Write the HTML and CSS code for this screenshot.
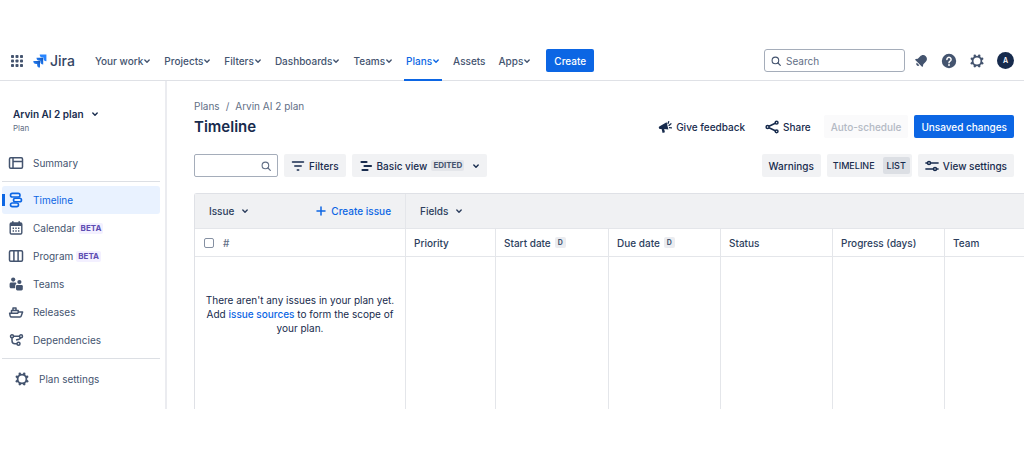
FILE: index.html
```html
<!DOCTYPE html>
<html lang="en">
<head>
<meta charset="utf-8">
<meta name="viewport" content="width=device-width, initial-scale=1">
<title>Timeline - Arvin AI 2 plan - Jira</title>
<link rel="stylesheet" href="styles.css">
</head>
<body>
<svg class="sprite" aria-hidden="true">
  <symbol id="chevron" viewBox="0 0 8 8"><path d="M1.8 3 4 5.2 6.2 3" fill="none" stroke="currentColor" stroke-width="1.4" stroke-linecap="round" stroke-linejoin="round"/></symbol>
  <symbol id="search" viewBox="0 0 12 12"><circle cx="5.4" cy="5.4" r="3.3" fill="none" stroke="currentColor" stroke-width="1.1"/><path d="m8 8 2.3 2.3" stroke="currentColor" stroke-width="1.2" stroke-linecap="round"/></symbol>
  <symbol id="gear" viewBox="0 0 16 16"><circle cx="8" cy="8" r="4.4" fill="none" stroke="currentColor" stroke-width="1.8"/><g fill="currentColor"><circle cx="5.8" cy="2.9" r="1.3"/><circle cx="10.2" cy="2.9" r="1.3"/><circle cx="13.1" cy="5.8" r="1.3"/><circle cx="13.1" cy="10.2" r="1.3"/><circle cx="10.2" cy="13.1" r="1.3"/><circle cx="5.8" cy="13.1" r="1.3"/><circle cx="2.9" cy="10.2" r="1.3"/><circle cx="2.9" cy="5.8" r="1.3"/></g></symbol>
</svg>

<header class="topbar">
  <button class="icon-button" aria-label="Switch apps">
    <svg class="icon-14" viewBox="0 0 14 14" fill="currentColor"><rect x="1" y="1" width="3" height="3" rx=".8"/><rect x="5.5" y="1" width="3" height="3" rx=".8"/><rect x="10" y="1" width="3" height="3" rx=".8"/><rect x="1" y="5.5" width="3" height="3" rx=".8"/><rect x="5.5" y="5.5" width="3" height="3" rx=".8"/><rect x="10" y="5.5" width="3" height="3" rx=".8"/><rect x="1" y="10" width="3" height="3" rx=".8"/><rect x="5.5" y="10" width="3" height="3" rx=".8"/><rect x="10" y="10" width="3" height="3" rx=".8"/></svg>
  </button>
  <a class="brand" href="#">
    <svg class="brand-mark" viewBox="0 0 14 14">
      <defs><linearGradient id="fold" x1="1" y1="0" x2="0" y2="1"><stop offset=".1" stop-color="#1558bc"/><stop offset=".7" stop-color="#2684ff"/></linearGradient></defs>
      <path fill="#2684ff" d="M6.7.6h6.700v6.600a2.900 2.900 0 0 1-2.900-2.900V3.500H9.600A2.900 2.900 0 0 1 6.700.6z"/>
      <path fill="url(#fold)" d="M3.500 3.800h6.700v6.600a2.900 2.900 0 0 1-2.900-2.900v-.8h-.9a2.900 2.900 0 0 1-2.900-2.900z"/>
      <path fill="url(#fold)" d="M.3 7H7v6.600a2.900 2.900 0 0 1-2.900-2.900v-.8h-.9A2.900 2.900 0 0 1 .3 7z"/>
    </svg>
    <span>Jira</span>
  </a>
  <nav class="mainnav" aria-label="Main">
    <button class="navitem">Your work <svg class="chev"><use href="#chevron"/></svg></button>
    <button class="navitem">Projects <svg class="chev"><use href="#chevron"/></svg></button>
    <button class="navitem">Filters <svg class="chev"><use href="#chevron"/></svg></button>
    <button class="navitem">Dashboards <svg class="chev"><use href="#chevron"/></svg></button>
    <button class="navitem">Teams <svg class="chev"><use href="#chevron"/></svg></button>
    <button class="navitem navitem-active">Plans <svg class="chev"><use href="#chevron"/></svg></button>
    <a class="navitem" href="#">Assets</a>
    <button class="navitem">Apps <svg class="chev"><use href="#chevron"/></svg></button>
  </nav>
  <button class="button button-primary create">Create</button>
  <label class="searchbox">
    <svg class="icon-12"><use href="#search"/></svg>
    <input type="search" placeholder="Search" aria-label="Search">
  </label>
  <div class="tools">
    <button class="icon-button" aria-label="Notifications">
      <svg class="icon-16" viewBox="0 0 16 16" fill="currentColor"><g transform="rotate(45 8 8)"><path d="M8 1.200c2.600 0 3.900 2 3.900 4.300v3.100l1.200 1.800v.9H2.900v-.9l1.200-1.800V5.500C4.100 3.200 5.400 1.200 8 1.200z"/><path d="M6.200 12.200h3.600a1.800 1.800 0 0 1-3.600 0z"/></g></svg>
    </button>
    <button class="icon-button" aria-label="Help">
      <svg class="icon-16" viewBox="0 0 16 16"><circle cx="8" cy="8" r="7.200" fill="currentColor"/><path d="M5.900 6.400a2.100 2.100 0 1 1 3.200 1.800c-.8.500-1.100.8-1.100 1.600" fill="none" stroke="#fff" stroke-width="1.500" stroke-linecap="round"/><circle cx="8" cy="12" r=".95" fill="#fff"/></svg>
    </button>
    <button class="icon-button" aria-label="Settings"><svg class="icon-16"><use href="#gear"/></svg></button>
    <button class="avatar" aria-label="Account">A</button>
  </div>
</header>

<div class="shell">
  <aside class="sidebar">
    <button class="plan-switch">Arvin AI 2 plan <svg class="chev"><use href="#chevron"/></svg></button>
    <div class="plan-kind">Plan</div>
    <nav class="sidenav" aria-label="Plan">
      <a class="sideitem" href="#">
        <svg class="icon-16" viewBox="0 0 16 16" fill="none" stroke="currentColor" stroke-width="1.500"><rect x="1.500" y="2.800" width="13" height="10.400" rx="1.200"/><path d="M5 3v10M5 6.400h9.500"/></svg>
        Summary</a>
      <hr class="rule">
      <a class="sideitem sideitem-active" href="#" aria-current="page">
        <svg class="icon-16" viewBox="0 0 16 16" fill="none" stroke="currentColor" stroke-width="1.600"><rect x="2.500" y="1.400" width="9.500" height="3.600" rx="1.800"/><rect x="5.500" y="6.200" width="8" height="3.600" rx="1.800"/><rect x="2.500" y="11" width="8" height="3.600" rx="1.800"/></svg>
        Timeline</a>
      <a class="sideitem" href="#">
        <svg class="icon-16" viewBox="0 0 16 16"><rect x="2.200" y="3" width="11.600" height="11" rx="1.200" fill="none" stroke="currentColor" stroke-width="1.400"/><path d="M2.200 3h11.600v3H2.200zM4 1.200h1.600V4H4zM10.400 1.200H12V4h-1.600z" fill="currentColor"/><path d="M4.600 8.300h7M4.600 11h7" stroke="currentColor" stroke-width="1.400" stroke-dasharray="1.400 1.300"/></svg>
        Calendar <span class="beta">BETA</span></a>
      <a class="sideitem" href="#">
        <svg class="icon-16" viewBox="0 0 16 16" fill="none" stroke="currentColor" stroke-width="1.500"><rect x="1.500" y="2.800" width="13" height="10.400" rx="1.200"/><path d="M5.900 3v10M10.100 3v10"/></svg>
        Program <span class="beta">BETA</span></a>
      <a class="sideitem" href="#">
        <svg class="icon-16" viewBox="0 0 16 16" fill="currentColor"><circle cx="5.200" cy="3.600" r="2.100"/><path d="M1.600 8c0-.9.700-1.500 1.500-1.500h4c.8 0 1.300.5 1.300 1.200-.9.600-1.200 1.200-1.200 2.300v2.200H3.100c-.8 0-1.500-.7-1.500-1.500z"/><circle cx="11.400" cy="6" r="2.100"/><path d="M8 10.300C8 9.500 8.600 9 9.400 9h4c.8 0 1.400.5 1.400 1.300V13c0 .8-.6 1.400-1.400 1.400h-4C8.600 14.400 8 13.800 8 13z"/></svg>
        Teams</a>
      <a class="sideitem" href="#">
        <svg class="icon-16" viewBox="0 0 16 16" fill="none" stroke="currentColor" stroke-width="1.500" stroke-linejoin="round"><path d="M1.600 9.200h8l1.300-1.200h3.700l-1.500 4.200c-.1.500-.6.800-1.100.8H3.500c-.7 0-1.100-.4-1.300-1z"/><path d="M3.500 9V6.400h6.700V8.800M5 6.200V3.900h3v2.300"/></svg>
        Releases</a>
      <a class="sideitem" href="#">
        <svg class="icon-16" viewBox="0 0 16 16" fill="none" stroke="currentColor" stroke-width="1.500"><circle cx="4" cy="4.300" r="1.500"/><circle cx="13" cy="4.300" r="1.500"/><circle cx="10.500" cy="11.800" r="1.500"/><path d="M5.500 4.300h6M4 5.800v2.900a3 3 0 0 0 3 3h2M12.600 5.800c-.5 1.700-2.500 1.800-4.600 2.200"/></svg>
        Dependencies</a>
      <hr class="rule">
      <a class="sideitem sideitem-inset" href="#"><svg class="icon-16"><use href="#gear"/></svg> Plan settings</a>
    </nav>
  </aside>

  <main class="content">
    <nav class="crumbs" aria-label="Breadcrumb"><a href="#">Plans</a><span>/</span><a href="#">Arvin AI 2 plan</a></nav>
    <div class="titlebar">
      <h1>Timeline</h1>
      <div class="actions">
        <button class="button button-plain">
          <svg class="icon-14" viewBox="0 0 14 14"><path fill="currentColor" d="M.8 7.600c-.2-.5 0-1 .5-1.200L8.600 2.300l1.800 7.200-4.200-.4.700 3.200-2.300.6-1-3.900-1.800-.1c-.4 0-.7-.3-.8-.7z"/><path d="M10 3.600l.7-2M11 5.400l2-1.600M11.500 7.700l2 .2" stroke="currentColor" stroke-width="1.300" stroke-linecap="round"/></svg>
          Give feedback</button>
        <button class="button button-plain">
          <svg class="icon-14" viewBox="0 0 14 14" fill="none" stroke="currentColor" stroke-width="1.500"><circle cx="2.600" cy="7" r="1.500"/><circle cx="11.600" cy="2.700" r="1.400"/><circle cx="11.600" cy="11.300" r="1.400"/><path d="m4 6.300 6.300-3M4 7.700l6.300 3"/></svg>
          Share</button>
        <button class="button button-disabled" disabled>Auto-schedule</button>
        <button class="button button-primary">Unsaved changes</button>
      </div>
    </div>
    <div class="toolbar">
      <label class="filterbox"><input type="search" aria-label="Search issues"><svg class="icon-12"><use href="#search"/></svg></label>
      <button class="button">
        <svg class="icon-14" viewBox="0 0 14 14" stroke="currentColor" stroke-width="1.500" stroke-linecap="round"><path d="M1.500 3h11M3.800 7h6.400M6.300 11h1.400"/></svg>
        Filters</button>
      <button class="button">
        <svg class="icon-14" viewBox="0 0 14 14" stroke="currentColor" stroke-width="2.200" stroke-linecap="round"><path d="M2.500 3h5M5.500 7H12M3.500 11h5"/></svg>
        Basic view <span class="edited">EDITED</span> <svg class="chev chev-end"><use href="#chevron"/></svg></button>
      <div class="toolbar-end">
        <button class="button">Warnings</button>
        <div class="switch" role="group" aria-label="View mode">
          <button class="mode">TIMELINE</button><button class="mode mode-on" aria-pressed="true">LIST</button>
        </div>
        <button class="button">
          <svg class="icon-14" viewBox="0 0 14 14" fill="none" stroke="currentColor" stroke-width="1.500" stroke-linecap="round"><circle cx="4" cy="4" r="1.500"/><circle cx="10" cy="10" r="1.500"/><path d="M.9 4h1.500M5.700 4h7.400M.9 10h7.400M11.600 10h1.500"/></svg>
          View settings</button>
      </div>
    </div>

    <table class="grid">
      <colgroup><col class="col-issue"><col class="col-priority"><col class="col-start"><col class="col-field"><col class="col-field"><col class="col-field"><col></colgroup>
      <thead>
        <tr class="groups">
          <th><div class="group"><button class="grouplabel">Issue <svg class="chev"><use href="#chevron"/></svg></button>
            <button class="create-issue"><svg class="icon-12" viewBox="0 0 12 12" stroke="currentColor" stroke-width="1.500" stroke-linecap="round"><path d="M6 2v8M2 6h8"/></svg>Create issue</button></div></th>
          <th colspan="6"><div class="group"><button class="grouplabel">Fields <svg class="chev"><use href="#chevron"/></svg></button></div></th>
        </tr>
        <tr class="fields">
          <th><div class="pick"><input type="checkbox" aria-label="Select all issues"><span>#</span></div></th>
          <th>Priority</th>
          <th><div class="field">Start date <span class="tag">D</span></div></th>
          <th><div class="field">Due date <span class="tag">D</span></div></th>
          <th>Status</th>
          <th>Progress (days)</th>
          <th>Team</th>
        </tr>
      </thead>
      <tbody>
        <tr>
          <td class="empty">There aren't any issues in your plan yet. Add <a href="#">issue sources</a> to form the scope of your plan.</td>
          <td></td><td></td><td></td><td></td><td></td><td></td>
        </tr>
      </tbody>
    </table>
  </main>
</div>
</body>
</html>
```
FILE: styles.css
```css
* { box-sizing: border-box; }

body {
  margin: 0;
  padding: 41px 0 42px;
  background: #fff;
  color: #172b4d;
  font: 10px/14px Inter, "Liberation Sans", sans-serif;
  overflow-x: hidden;
}

button, input { font: inherit; color: inherit; }
button { margin: 0; padding: 0; border: 0; background: none; cursor: pointer; }
a { color: inherit; text-decoration: none; }
svg { flex: none; }

.sprite { position: absolute; width: 0; height: 0; }
.chev { width: 8px; height: 8px; }
.chev-end { margin-left: 4px; }
.icon-12 { width: 12px; height: 12px; }
.icon-14 { width: 14px; height: 14px; }
.icon-16 { width: 16px; height: 16px; }

/* Top bar */
.topbar {
  display: flex;
  align-items: center;
  height: 40px;
  padding: 0 10px;
  border-bottom: 1px solid #dfe1e6;
  color: #44546f;
}
.icon-button { display: flex; }
.brand {
  display: flex;
  align-items: center;
  gap: 3px;
  margin: 0 18px 0 9px;
  color: #344563;
  font-size: 14px;
  font-weight: 500;
}
.brand-mark { width: 14px; height: 14px; }
.mainnav { display: flex; align-self: stretch; gap: 9px; }
.navitem {
  display: flex;
  align-items: center;
  height: 40px;
  padding: 0 2px;
  border-bottom: 2px solid transparent;
  border-top: 2px solid transparent;
  font-weight: 500;
  white-space: nowrap;
}
.navitem-active { color: #0c66e4; border-bottom-color: #0c66e4; }
.searchbox {
  display: flex;
  align-items: center;
  gap: 4px;
  width: 141px;
  height: 23px;
  margin-left: auto;
  padding: 0 5px;
  border: 1px solid #a5adba;
  border-radius: 3px;
}
.searchbox input, .filterbox input {
  flex: 1;
  min-width: 0;
  padding: 0;
  border: 0;
  outline: 0;
  background: none;
}
.searchbox input::placeholder { color: #626f86; opacity: 1; }
.tools { display: flex; align-items: center; gap: 12px; margin-left: 8px; }
.avatar {
  width: 17px;
  height: 17px;
  border-radius: 50%;
  background: #172b4d;
  color: #fff;
  font-size: 7px;
  font-weight: 600;
  line-height: 17px;
}

/* Buttons */
.button {
  display: flex;
  align-items: center;
  gap: 4px;
  height: 23px;
  padding: 0 7px;
  border-radius: 2px;
  background: #f1f2f4;
  font-weight: 500;
  white-space: nowrap;
}
.button-primary { background: #0c66e4; color: #fff; }
.button-plain { background: none; }
.button-disabled { background: #fafafb; color: #b3b9c4; cursor: default; }
.create { margin-left: 13px; padding: 0 8px; }

/* Sidebar */
.shell { display: flex; min-height: 328px; }
.sidebar {
  flex: none;
  width: 167px;
  padding: 26px 5px 0 2px;
  border-right: 2px solid #ebecf0;
  color: #44546f;
}
.plan-switch {
  display: flex;
  align-items: center;
  gap: 7px;
  padding-left: 11px;
  color: #172b4d;
  font-weight: 600;
}
.plan-kind { padding-left: 11px; color: #626f86; font-size: 8px; }
.sidenav { padding-top: 14px; }
.sideitem {
  display: flex;
  align-items: center;
  gap: 9px;
  height: 28px;
  padding-left: 6px;
  border-radius: 3px;
}
.sideitem-active {
  background: linear-gradient(#0c66e4, #0c66e4) left center / 3px 12px no-repeat #e9f2ff;
  color: #0c66e4;
}
.sideitem-inset { padding-left: 12px; }
.rule { height: 1px; margin: 4px 0; border: 0; background: #dcdfe4; }
.rule:last-of-type { margin-bottom: 6px; }
.beta {
  margin-left: -6px;
  padding: 0 2px;
  border-radius: 2px;
  background: #f3f0ff;
  color: #5e4db2;
  font-size: 8px;
  font-weight: 700;
  line-height: 11px;
}

/* Page heading */
.content { flex: 1; display: flex; flex-direction: column; min-width: 0; padding: 18px 0 0 27px; }
.crumbs { display: flex; gap: 6px; color: #626f86; }
.titlebar { display: flex; align-items: flex-start; padding: 2px 10px 0 0; }
h1 { margin: 0; font-size: 15px; font-weight: 600; line-height: 24px; }
.actions { display: flex; gap: 6px; margin-left: auto; }
.toolbar { display: flex; gap: 6px; padding: 15px 10px 16px 0; }
.toolbar-end { display: flex; gap: 6px; margin-left: auto; }
.filterbox {
  display: flex;
  align-items: center;
  width: 84px;
  height: 23px;
  padding: 0 5px;
  border: 1px solid #a5adba;
  border-radius: 2px;
  color: #626f86;
}
.edited {
  padding: 0 2px;
  border-radius: 2px;
  background: #e4e6ea;
  color: #44546f;
  font-size: 8px;
  font-weight: 700;
  line-height: 11px;
}
.switch { display: flex; align-items: center; height: 23px; padding: 0 2px; border-radius: 2px; background: #f1f2f4; }
.mode { height: 17px; padding: 0 4px; border-radius: 2px; font-size: 9px; font-weight: 500; }
.mode + .mode { margin-left: 4px; }
.mode-on { background: #dcdfe4; }

/* Issue table */
.grid {
  flex: 1;
  width: 100%;
  height: 216px;
  border-collapse: separate;
  border-spacing: 0;
  table-layout: fixed;
  border-top: 1px solid #dfe1e6;
  border-left: 1px solid #dfe1e6;
  border-top-left-radius: 3px;
}
.col-issue { width: 211px; }
.col-priority { width: 90px; }
.col-start { width: 113px; }
.col-field { width: 112px; }
.grid th, .grid td { padding: 0; border-right: 1px solid #e4e6ea; text-align: left; }
.grid th { border-bottom: 1px solid #e4e6ea; color: #2c3e5d; font-weight: 500; }
.grid th:last-child, .grid td:last-child { border-right: 0; }
.groups th { height: 35px; background: #f0f1f3; }
.group { display: flex; align-items: center; justify-content: space-between; padding: 0 14px; }
.grouplabel { display: flex; align-items: center; gap: 7px; font-weight: 500; }
.create-issue { display: flex; align-items: center; gap: 4px; color: #0c66e4; font-weight: 500; }
.grid .fields th { height: 28px; padding-left: 8px; white-space: nowrap; }
.field { display: flex; align-items: center; gap: 4px; }
.pick { display: flex; align-items: center; gap: 9px; color: #626f86; }
.pick input {
  appearance: none;
  width: 10px;
  height: 10px;
  margin: 0 0 0 1px;
  border: 1px solid #8590a2;
  border-radius: 2px;
}
.tag {
  padding: 0 3px;
  border-radius: 2px;
  background: #ebecf0;
  color: #44546f;
  font-size: 7px;
  font-weight: 700;
  line-height: 11px;
}
.grid .empty { padding: 36px 8px 0; text-align: center; vertical-align: top; }
.grid .empty a { color: #0c66e4; font-weight: 500; }
```
